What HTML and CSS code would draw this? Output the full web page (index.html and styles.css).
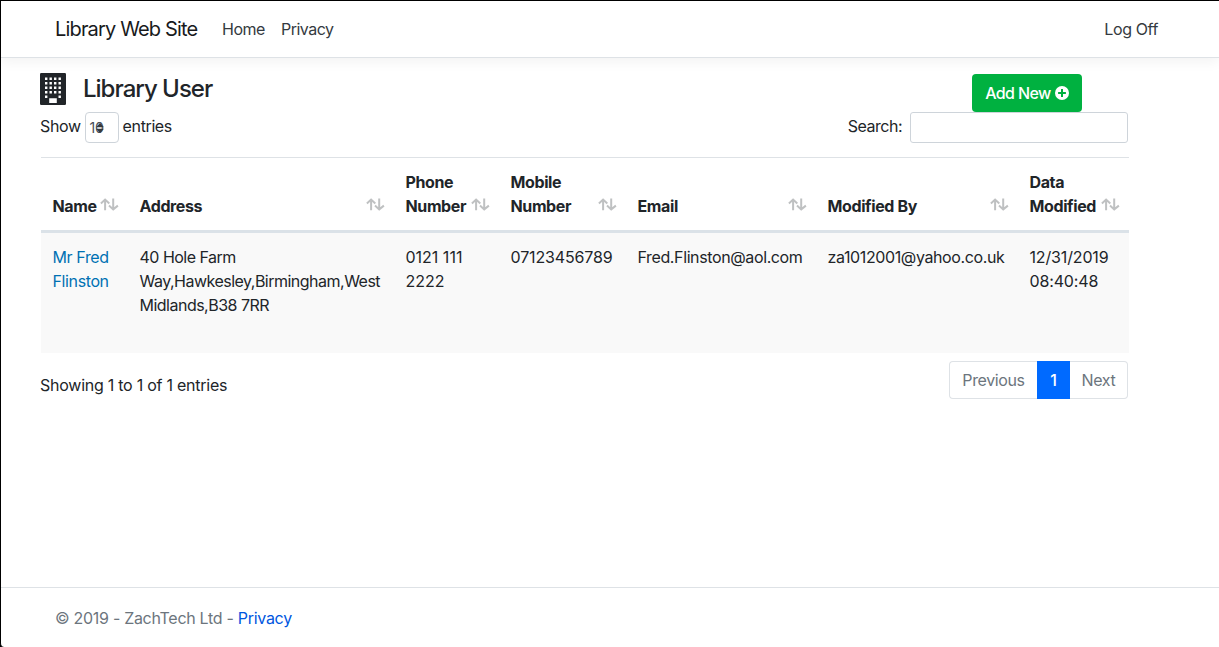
FILE: index.html
```html
<!DOCTYPE html>
<html lang="en">
<head>
<meta charset="utf-8">
<title>Library User - Library Web Site</title>
<link rel="stylesheet" href="styles.css">
</head>
<body>
<svg class="defs" width="0" height="0" aria-hidden="true">
  <symbol id="sort" viewBox="0 0 19 13"><path d="M.9 5.4 5.1 1.5 9.3 5.4M5.1 1.7V12.3M13.2 .5V11.2M9 7.6l4.2 3.8 4.7-3.8"/></symbol>
</svg>
<div class="page">
  <header class="navbar">
    <a class="brand">Library Web Site</a>
    <nav class="links"><a class="home">Home</a><a>Privacy</a></nav>
    <a class="logoff">Log Off</a>
  </header>
  <main class="content">
    <div class="title-row">
      <svg class="building" viewBox="0 0 26 32">
        <path class="wall" d="M1.2 0H24.8Q26 0 26 1.2V30.8Q26 32 24.8 32H1.2Q0 32 0 30.8V1.2Q0 0 1.2 0Z"/>
        <path class="windows" d="M5 5.8H22M5 10.3H22M5 14.8H22M5 19.3H22"/>
        <path class="windows" d="M5 23.8H8M18.5 23.8H21.5"/>
        <path class="door" d="M9.2 25.2H16.8V30H9.2Z"/>
      </svg>
      <h1 class="title">Library User</h1>
      <button class="add"><span>Add New</span>
        <svg class="plus" viewBox="0 0 14 14"><circle cx="7" cy="7" r="7"/><path d="M7 3.1V10.9M3.1 7H10.9"/></svg>
      </button>
    </div>
    <div class="controls">
      <div class="length"><span>Show</span>
        <span class="select"><span>10</span><svg class="arrows" viewBox="0 0 8 10"><path d="M4 0 8 4.2H0ZM0 5.8H8L4 10Z"/></svg></span>
        <span>entries</span></div>
      <label class="search"><span>Search:</span><input class="search-box" type="text"></label>
    </div>
    <table class="users">
      <colgroup><col class="c-name"><col class="c-address"><col class="c-phone"><col class="c-mobile"><col class="c-email"><col class="c-by"><col class="c-date"></colgroup>
      <thead><tr>
        <th><div class="head"><span>Name</span><svg class="sort"><use href="#sort"/></svg></div></th>
        <th><div class="head"><span>Address</span><svg class="sort"><use href="#sort"/></svg></div></th>
        <th><div class="head"><span>Phone<br>Number</span><svg class="sort"><use href="#sort"/></svg></div></th>
        <th><div class="head"><span>Mobile<br>Number</span><svg class="sort"><use href="#sort"/></svg></div></th>
        <th><div class="head"><span>Email</span><svg class="sort"><use href="#sort"/></svg></div></th>
        <th><div class="head"><span>Modified By</span><svg class="sort"><use href="#sort"/></svg></div></th>
        <th><div class="head"><span>Data<br>Modified</span><svg class="sort"><use href="#sort"/></svg></div></th>
      </tr></thead>
      <tbody><tr>
        <td><a class="user-link">Mr Fred<br>Flinston</a></td>
        <td class="address">40 Hole Farm<br>Way,Hawkesley,Birmingham,West<br>Midlands,B38 7RR</td>
        <td class="phone">0121 111<br>2222</td>
        <td class="mobile">07123456789</td>
        <td class="email">Fred.Flinston@aol.com</td>
        <td class="by">za1012001@yahoo.co.uk</td>
        <td class="date">12/31/2019<br>08:40:48</td>
      </tr></tbody>
    </table>
    <div class="bottom">
      <span class="info">Showing 1 to 1 of 1 entries</span>
      <div class="pages"><a class="prev">Previous</a><a class="current">1</a><a class="next">Next</a></div>
    </div>
  </main>
  <footer class="footer">© 2019 - ZachTech Ltd - <a class="footer-link">Privacy</a></footer>
</div>
</body>
</html>
```
FILE: styles.css
```css
* { box-sizing: border-box; }
body {
  margin: 0;
  background: #000;
  color: #212529;
  font: 16px/24px Inter, "Liberation Sans", sans-serif;
  letter-spacing: -0.38px;
}
.defs { position: absolute; }
.page {
  display: flex;
  flex-direction: column;
  height: 647px;
  border: solid #000;
  border-width: 1px 0 0 1px;
  border-bottom-left-radius: 4px;
  background: #fff;
  overflow: hidden;
}
.navbar {
  display: flex;
  align-items: center;
  flex: none;
  height: 57px;
  padding: 0 61px 0 54px;
  border-bottom: 1px solid #dee2e6;
  box-shadow: 0 4px 12px rgba(0, 0, 0, .05);
}
.brand { width: 167px; font-size: 20px; letter-spacing: -0.84px; color: #181a1c; white-space: nowrap; }
.links { display: flex; flex: 1; color: #343a40; letter-spacing: -0.5px; }
.home { width: 59px; }
.logoff { color: #343a40; }
.content { flex: 1; width: 1089px; margin-left: 39px; padding-top: 15px; }
.title-row { display: flex; align-items: flex-start; height: 39px; }
.building { width: 26px; height: 32px; }
.wall { fill: #212529; }
.windows { fill: none; stroke: #fff; stroke-width: 2.4; stroke-dasharray: 2.4 2.1; }
.door { fill: #fff; }
.title { flex: 1; margin: 0 0 0 17px; font-size: 24px; line-height: 31px; font-weight: 500; letter-spacing: -1px; }
.add {
  display: flex;
  align-items: center;
  justify-content: center;
  gap: 4px;
  width: 110px;
  height: 38px;
  margin: 1px 47px 0 0;
  padding: 0;
  border: 0;
  border-radius: 4px;
  background: #00b140;
  color: #fff;
  font: 500 16px/24px Inter, "Liberation Sans", sans-serif;
  letter-spacing: -0.6px;
}
.plus { width: 14px; height: 14px; fill: #fff; }
.plus path { stroke: #00b140; stroke-width: 2; }
.controls { display: flex; justify-content: space-between; height: 45px; }
.length { display: flex; gap: 4px; line-height: 28px; }
.select {
  display: flex;
  align-items: center;
  width: 34px;
  height: 31px;
  padding-left: 4px;
  border: 1px solid #ced4da;
  border-radius: 4px;
  color: #495057;
  font-size: 14px;
}
.arrows { width: 8px; height: 10px; margin-left: -7px; fill: #343a40; }
.search { display: flex; gap: 8px; margin-right: 1px; line-height: 28px; letter-spacing: -0.5px; }
.search-box { width: 218px; height: 31px; border: 1px solid #ced4da; border-radius: 3px; background: #fff; }
.users { width: 1088px; margin-left: 1px; border-spacing: 0; table-layout: fixed; }
.c-name { width: 87px; }
.c-address { width: 266px; }
.c-phone { width: 105px; }
.c-mobile { width: 127px; }
.c-email { width: 190px; }
.c-by { width: 202px; }
.c-date { width: 111px; }
th {
  height: 76px;
  padding: 12px 9px 12px 11.5px;
  border-top: 1px solid #dee2e6;
  border-bottom: 3px solid #dbe2e8;
  text-align: left;
  vertical-align: bottom;
  font-weight: 700;
}
.head { display: flex; align-items: flex-end; justify-content: space-between; white-space: nowrap; }
.sort { flex: none; width: 19px; height: 13px; margin: 0 0 7px -10px; fill: none; stroke: #bfc1c2; stroke-width: 2; }
td { height: 120px; padding: 12px 0 0 11.5px; background: #f9f9f9; vertical-align: top; white-space: nowrap; }
.user-link { color: #0071b3; }
.address { letter-spacing: -0.51px; }
.phone { letter-spacing: 0; }
.mobile, .date { letter-spacing: -0.15px; }
.bottom { display: flex; justify-content: space-between; margin: 8px 1px 0 0; }
.info { padding-top: 12px; letter-spacing: -0.25px; }
.pages { display: flex; height: 38px; line-height: 36px; color: #6c757d; text-align: center; }
.prev { width: 88px; border: solid #dee2e6; border-width: 1px 0 1px 1px; border-radius: 4px 0 0 4px; }
.current { width: 33px; background: #006aff; color: #fff; line-height: 38px; font-weight: 500; }
.next { width: 58px; border: solid #dee2e6; border-width: 1px 1px 1px 0; border-radius: 0 4px 4px 0; }
.footer { flex: none; height: 60px; padding: 18px 54px; border-top: 1px solid #dee2e6; color: #6c757d; letter-spacing: -0.29px; }
.footer-link { color: #0056e0; }
```
